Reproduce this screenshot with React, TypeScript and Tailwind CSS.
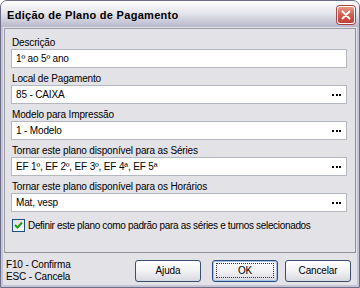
import React from "react";

const font = { fontFamily: '"Liberation Sans", Arial, sans-serif' };

function Dots() {
  return (
    <div className="flex gap-[1.5px] items-center">
      <span className="block w-[2px] h-[2px] bg-black" />
      <span className="block w-[2px] h-[2px] bg-black" />
      <span className="block w-[2px] h-[2px] bg-black" />
    </div>
  );
}

function Field({ label, value, dots, className }: { label: string; value: string; dots?: boolean; className?: string }) {
  return (
    <div className={className}>
      <div className="h-[12px] leading-[12px] pl-[1px]">{label}</div>
      <div className="h-[19px] bg-white border border-[#b4b8c0] flex items-center justify-between pl-[4px] pr-[5px]">
        <span>{value}</span>
        {dots && <Dots />}
      </div>
    </div>
  );
}

function Button({ children, primary }: { children: React.ReactNode; primary?: boolean }) {
  return (
    <div
      className={
        "w-[66px] h-[22px] rounded-[3px] border flex items-center justify-center bg-gradient-to-b from-[#ffffff] via-[#f2f2f5] to-[#d8d8e0] " +
        (primary ? "border-[#2a4d80] shadow-[inset_0_0_0_1px_#a9c3e6]" : "border-[#3c4e6e]")
      }
    >
      {primary ? (
        <span className="border border-dotted border-[#333] w-[58px] h-[15px] flex items-center justify-center leading-none">
          {children}
        </span>
      ) : (
        children
      )}
    </div>
  );
}

export default function App() {
  return (
    <div
      className="w-[360px] h-[288px] bg-[#c4c4d4] border border-[#6d6d88] rounded-t-[7px] flex flex-col text-[10px] tracking-[-0.15px] text-black overflow-hidden"
      style={font}
    >
      <div className="h-[26px] shrink-0 flex items-center justify-between pl-[6px] pr-[4px] pt-[1px] bg-gradient-to-b from-[#ffffff] via-[#e2e2ea] to-[#b8b8cc]">
        <span className="text-[11px] font-bold tracking-[0.3px] pt-[1px]">Edição de Plano de Pagamento</span>
        <div className="w-[18px] h-[18px] rounded-[3px] border border-[#ffffff] bg-gradient-to-b from-[#e89a8a] via-[#d2594d] to-[#c0403a] flex items-center justify-center shadow-[0_0_0_1px_#a44]">
          <svg width="10" height="10" viewBox="0 0 10 10">
            <path d="M1.5 1.5 L8.5 8.5 M8.5 1.5 L1.5 8.5" stroke="white" strokeWidth="1.8" strokeLinecap="round" />
          </svg>
        </div>
      </div>
      <div className="flex-1 mx-[2px] mb-[2px] bg-[#e3e2e7] flex flex-col">
        <div className="mt-[1px] ml-[1px] mr-[1px] h-[225px] border border-t-[#9d9da6] border-l-[#9d9da6] border-b-[#8f8f98] border-r-[#8f8f98] px-[6px] pr-[8px] pt-[8px]">
          <Field label="Descrição" value="1º ao 5º ano" />
          <Field className="mt-[5px]" label="Local de Pagamento" value="85 - CAIXA" dots />
          <Field className="mt-[5px]" label="Modelo para Impressão" value="1 - Modelo" dots />
          <Field className="mt-[5px]" label="Tornar este plano disponível para as Séries" value="EF 1º, EF 2º, EF 3º, EF 4ª, EF 5ª" dots />
          <Field className="mt-[5px]" label="Tornar este plano disponível para os Horários" value="Mat, vesp" dots />
          <div className="mt-[6px] flex items-center gap-[3px] pl-[1px]">
            <div className="w-[13px] h-[13px] border border-[#1c5180] bg-gradient-to-br from-[#dcdcd7] to-[#ffffff] flex items-center justify-center">
              <svg width="9" height="9" viewBox="0 0 9 9">
                <path d="M1 4 L3.5 6.5 L8 1.5" stroke="#21a121" strokeWidth="2" fill="none" />
              </svg>
            </div>
            <span className="tracking-[-0.33px]">Definir este plano como padrão para as séries e turnos selecionados</span>
          </div>
        </div>
        <div className="flex-1 flex items-center justify-between pl-[3px] pr-[6px] pt-[3px]">
          <div className="leading-[12px]">
            <div>F10 - Confirma</div>
            <div>ESC - Cancela</div>
          </div>
          <div className="flex items-center">
            <Button>Ajuda</Button>
            <div className="ml-[11px]">
              <Button primary>OK</Button>
            </div>
            <div className="ml-[7px]">
              <Button>Cancelar</Button>
            </div>
          </div>
        </div>
      </div>
    </div>
  );
}
